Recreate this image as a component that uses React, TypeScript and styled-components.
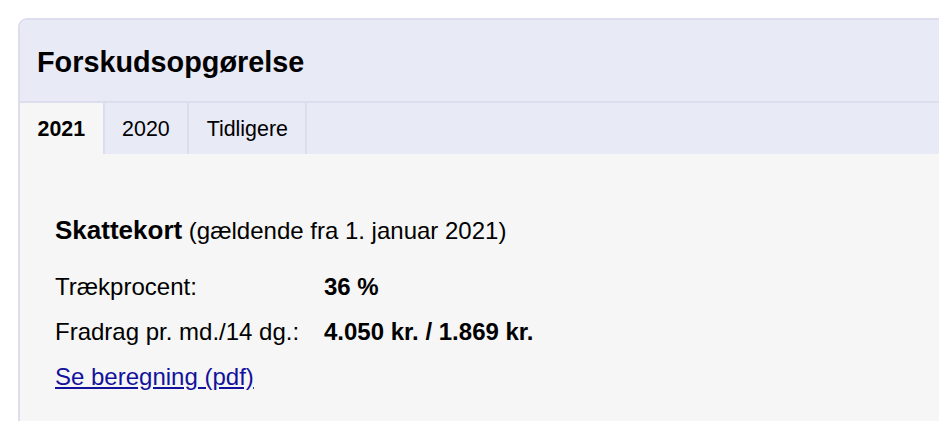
import React from "react";
import styled, { createGlobalStyle } from "styled-components";

const Global = createGlobalStyle`
  html, body { margin: 0; padding: 0; background: #ffffff; overflow: hidden; }
  body { font-family: "Liberation Sans", Arial, sans-serif; color: #000; }
`;

const Page = styled.div`
  padding: 18px 0 0 18px;
`;

const Card = styled.section`
  width: 1000px;
  border: 2px solid #dcdeed;
  border-radius: 9px 9px 0 0;
  overflow: hidden;
  background: #f6f6f6;
`;

const Header = styled.header`
  height: 83px;
  background: #e8eaf6;
  border-bottom: 2px solid #dcdeed;
  display: flex;
  align-items: center;
  padding: 0 17px;
  box-sizing: border-box;
`;

const Title = styled.h2`
  margin: 0;
  font-size: 28.8px;
  font-weight: 700;
  padding-top: 4px;
`;

const TabBar = styled.nav`
  display: flex;
  height: 51px;
  background: #e8eaf6;
`;

const Tab = styled.div<{ $active?: boolean }>`
  display: flex;
  align-items: center;
  padding: 2px 17.5px 0;
  font-size: 21.4px;
  font-weight: ${(p) => (p.$active ? 700 : 400)};
  background: ${(p) => (p.$active ? "#f6f6f6" : "#e8eaf6")};
  border-right: 2px solid #dcdeed;
`;

const Body = styled.div`
  padding: 61px 35px 40px;
  font-size: 24px;
`;

const Heading = styled.h3`
  margin: 0 0 27px;
  font-size: 24px;
  font-weight: 400;
  line-height: 30px;
  b { font-size: 26px; font-weight: 700; }
`;

const Rows = styled.dl`
  display: grid;
  grid-template-columns: 269px auto;
  row-gap: 18px;
  margin: 0 0 18px;
  line-height: 27px;
`;

const Label = styled.dt`
  margin: 0;
`;

const Value = styled.dd`
  margin: 0;
  font-weight: 700;
`;

const Link = styled.a`
  color: #12129c;
  text-decoration: underline;
  line-height: 27px;
`;

export default function App() {
  return (
    <>
      <Global />
      <Page>
        <Card>
          <Header>
            <Title>Forskudsopgørelse</Title>
          </Header>
          <TabBar>
            <Tab $active>2021</Tab>
            <Tab>2020</Tab>
            <Tab>Tidligere</Tab>
          </TabBar>
          <Body>
            <Heading>
              <b>Skattekort</b> (gældende fra 1. januar 2021)
            </Heading>
            <Rows>
              <Label>Trækprocent:</Label>
              <Value>36 %</Value>
              <Label>Fradrag pr. md./14 dg.:</Label>
              <Value>4.050 kr. / 1.869 kr.</Value>
            </Rows>
            <Link href="#">Se beregning (pdf)</Link>
          </Body>
        </Card>
      </Page>
    </>
  );
}
